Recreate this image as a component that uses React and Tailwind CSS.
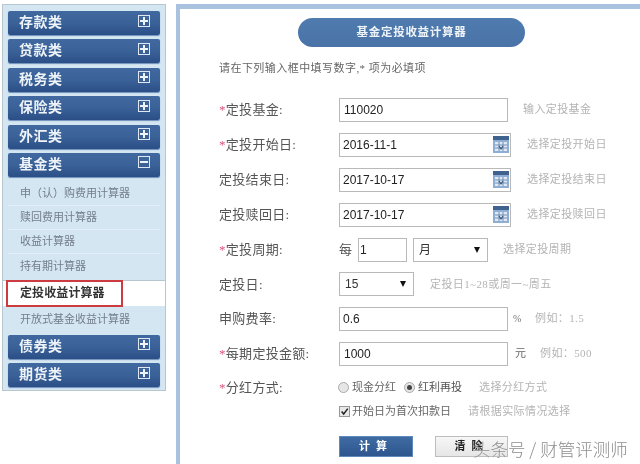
import React from "react";

const CJK = "font-['Liberation_Serif','Noto_Sans_CJK_SC',sans-serif]";

function Head({ label, open }) {
  return (
    <div className="h-[24px] rounded-[2px] bg-gradient-to-b from-[#41689f] via-[#3a6298] to-[#2b4e87] flex items-center justify-between pl-[11px] pr-[10px] shadow-[0_1px_1px_#6d8fb8]">
      <span className="text-[14px] font-bold text-[#eef3f8] tracking-[0.5px] leading-none">{label}</span>
      <span className="w-[12px] h-[12px] mb-[5px] border border-[#dfe8f2] relative flex items-center justify-center">
        <span className="absolute w-[8px] h-[2px] bg-[#eef3f8]" />
        {!open && <span className="absolute w-[2px] h-[8px] bg-[#eef3f8]" />}
      </span>
    </div>
  );
}

function Sub({ label }) {
  return (
    <div className="h-[24px] flex items-center pl-[12px] text-[11px] text-[#737e8a] border-b border-[#e4eff8] last:border-b-0">
      {label}
    </div>
  );
}

function Label({ star, text }) {
  return (
    <div className="w-[120px] text-[13px] text-[#555] shrink-0 tracking-[0.3px] leading-none">
      {star && <span className="text-[#d9557a]">*</span>}
      {text}
    </div>
  );
}

function Box({ w, value, pad = "pl-[4px]" }) {
  return (
    <div className={`h-[24px] ${w} border border-[#b9b9b9] bg-white flex items-center ${pad} text-[12px] text-[#222] font-['Liberation_Sans',sans-serif] shrink-0 relative`}>
      {value}
    </div>
  );
}

function Cal() {
  return (
    <svg width="16" height="17" viewBox="0 0 16 17" className="absolute right-[1px] top-[2px]">
      <rect width="16" height="17" fill="#8eaed4" />
      <rect width="16" height="4" fill="#3f628f" />
      <rect x="2" y="6" width="12" height="9" fill="#dfe9f3" />
      <path d="M2 9h12M2 12h12M6 6v9M10 6v9" stroke="#6f8fb5" strokeWidth="1" />
      <path d="M6 10l2 3 2-3" stroke="#35557f" strokeWidth="1.2" fill="none" />
    </svg>
  );
}

function DateBox({ value }) {
  return (
    <div className="h-[24px] w-[172px] border border-[#b9b9b9] bg-white flex items-center pl-[3px] text-[12px] text-[#222] font-['Liberation_Sans',sans-serif] relative shrink-0">
      {value}
      <Cal />
    </div>
  );
}

function Select({ w, value, sans }) {
  return (
    <div className={`h-[24px] ${w} border border-[#b9b9b9] bg-white flex items-center justify-between pl-[5px] pr-[7px] text-[12px] text-[#333] shrink-0 ${sans ? "font-['Liberation_Sans',sans-serif]" : ""}`}>
      <span>{value}</span>
      <span className="w-0 h-0 border-l-[3px] border-r-[3px] border-t-[6px] border-l-transparent border-r-transparent border-t-[#111]" />
    </div>
  );
}

function Hint({ children, className = "" }) {
  return <span className={`text-[11px] text-[#b4b4b4] tracking-[0.4px] whitespace-nowrap ${className}`}>{children}</span>;
}

function Row({ star, label, children, className = "h-[35px]" }) {
  return (
    <div className={`flex items-center ${className}`}>
      <Label star={star} text={label} />
      {children}
    </div>
  );
}

function Radio({ on }) {
  return (
    <span className="w-[11px] h-[11px] rounded-full border border-[#a9a9a9] bg-[#e6e6e6] flex items-center justify-center shrink-0">
      {on && <span className="w-[5px] h-[5px] rounded-full bg-[#444]" />}
    </span>
  );
}

export default function App() {
  return (
    <div className={`w-[640px] h-[464px] bg-white overflow-hidden relative flex items-start pt-[4px] pl-[2px] blur-[0.35px] ${CJK}`}>
      <aside className="w-[164px] h-[387px] border border-[#b8c6cf] bg-[#d5e6f3] px-[5px] pt-[6px] shrink-0">
        <div className="flex flex-col gap-[4.4px]">
          <Head label="存款类" />
          <Head label="贷款类" />
          <Head label="税务类" />
          <Head label="保险类" />
          <Head label="外汇类" />
          <Head label="基金类" open />
        </div>
        <div className="mt-[5px]">
          <Sub label="申（认）购费用计算器" />
          <Sub label="赎回费用计算器" />
          <Sub label="收益计算器" />
          <Sub label="持有期计算器" />
        </div>
        <div className="-mx-[5px] h-[26px] mt-[2px] bg-white border-t border-[#b8c6cf] relative">
          <div className="absolute left-[3px] top-[-1px] w-[117px] h-[27px] border-[2px] border-[#cc3b3f] flex items-center pl-[12px] text-[12px] font-bold text-[#333] tracking-[0.1px]">
            定投收益计算器
          </div>
        </div>
        <div className="h-[26px] mb-[3px] flex items-center pl-[12px] text-[11px] text-[#737e8a]">开放式基金收益计算器</div>
        <div className="flex flex-col gap-[4.4px]">
          <Head label="债券类" />
          <Head label="期货类" />
        </div>
      </aside>

      <main className="ml-[10px] flex-1 h-[460px] border-l-[4px] border-t-[5px] border-[#a9c2df] pl-[39px]">
        <div className="ml-[79px] mt-[9px] w-[227px] h-[29px] rounded-full bg-gradient-to-b from-[#4f7bae] to-[#4a73a8] flex items-center justify-center text-[11.5px] font-bold text-[#eef3f8] tracking-[0.7px]">
          基金定投收益计算器
        </div>
        <div className="mt-[14px] text-[11px] text-[#666] tracking-[0.45px] leading-[14px]">请在下列输入框中填写数字,* 项为必填项</div>
        <div className="mt-[17px]">
          <Row star label="定投基金:">
            <Box w="w-[169px]" value="110020" />
            <Hint className="ml-[15px]">输入定投基金</Hint>
          </Row>
          <Row star label="定投开始日:">
            <DateBox value="2016-11-1" />
            <Hint className="ml-[16px]">选择定投开始日</Hint>
          </Row>
          <Row label="定投结束日:">
            <DateBox value="2017-10-17" />
            <Hint className="ml-[16px]">选择定投结束日</Hint>
          </Row>
          <Row label="定投赎回日:">
            <DateBox value="2017-10-17" />
            <Hint className="ml-[16px]">选择定投赎回日</Hint>
          </Row>
          <Row star label="定投周期:">
            <span className="text-[13px] text-[#555] w-[19px]">每</span>
            <Box w="w-[49px]" value="1" pad="pl-[1px]" />
            <div className="w-[6px]" />
            <Select w="w-[75px]" value="月" />
            <Hint className="ml-[15px]">选择定投周期</Hint>
          </Row>
          <Row label="定投日:" className="h-[34px]">
            <Select w="w-[75px]" value="15" sans />
            <Hint className="ml-[16px] text-[10.5px]">定投日1~28或周一~周五</Hint>
          </Row>
          <Row label="申购费率:">
            <Box w="w-[169px]" value="0.6" pad="pl-[3px]" />
            <span className="ml-[5px] text-[10px] text-[#777] w-[16px]">%</span>
            <Hint className="ml-[6px]">例如：1.5</Hint>
          </Row>
          <Row star label="每期定投金额:">
            <Box w="w-[169px]" value="1000" />
            <span className="ml-[7px] text-[11px] text-[#666] w-[16px]">元</span>
            <Hint className="ml-[9px]">例如：500</Hint>
          </Row>
          <Row star label="分红方式:" className="h-[33px]">
            <div className="flex items-center gap-[3px] text-[11px] text-[#666] -ml-[1px]">
              <Radio />
              <span>现金分红</span>
              <span className="w-[2px]" />
              <Radio on />
              <span className="text-[#555]">红利再投</span>
            </div>
            <Hint className="ml-[17px]">选择分红方式</Hint>
          </Row>
          <div className="flex items-center h-[14px] ml-[120px]">
            <span className="w-[11px] h-[11px] border border-[#999] bg-[#e8e8e8] flex items-center justify-center shrink-0">
              <svg width="11" height="11" viewBox="0 0 11 11"><path d="M2 5.5l2.5 3L9.5 2" stroke="#222" strokeWidth="1.8" fill="none" /></svg>
            </span>
            <span className="ml-[2px] text-[11px] text-[#666]">开始日为首次扣款日</span>
            <Hint className="ml-[17px]">请根据实际情况选择</Hint>
          </div>
          <div className="flex items-center ml-[120px] mt-[18px]">
            <div className="w-[74px] h-[21px] bg-gradient-to-b from-[#3f6ba3] to-[#2f568e] border border-[#5f8abb] flex items-center justify-center text-[11px] font-bold text-white tracking-[6px]">
              计算
            </div>
            <div className="ml-[22px] w-[73px] h-[21px] bg-gradient-to-b from-[#f7f7f7] to-[#e6e6e6] border border-[#bdbdbd] flex items-center justify-center text-[11px] font-bold text-[#222] tracking-[6px]">
              清除
            </div>
          </div>
        </div>
      </main>

      <div className="absolute left-[473px] top-[437px] text-[17.5px] leading-[24px] text-[#8c8c8c] font-light [text-shadow:0_0_1px_#fff] font-['Noto_Sans_CJK_SC',sans-serif] whitespace-nowrap">
        头条号 / 财管评测师
      </div>
    </div>
  );
}
